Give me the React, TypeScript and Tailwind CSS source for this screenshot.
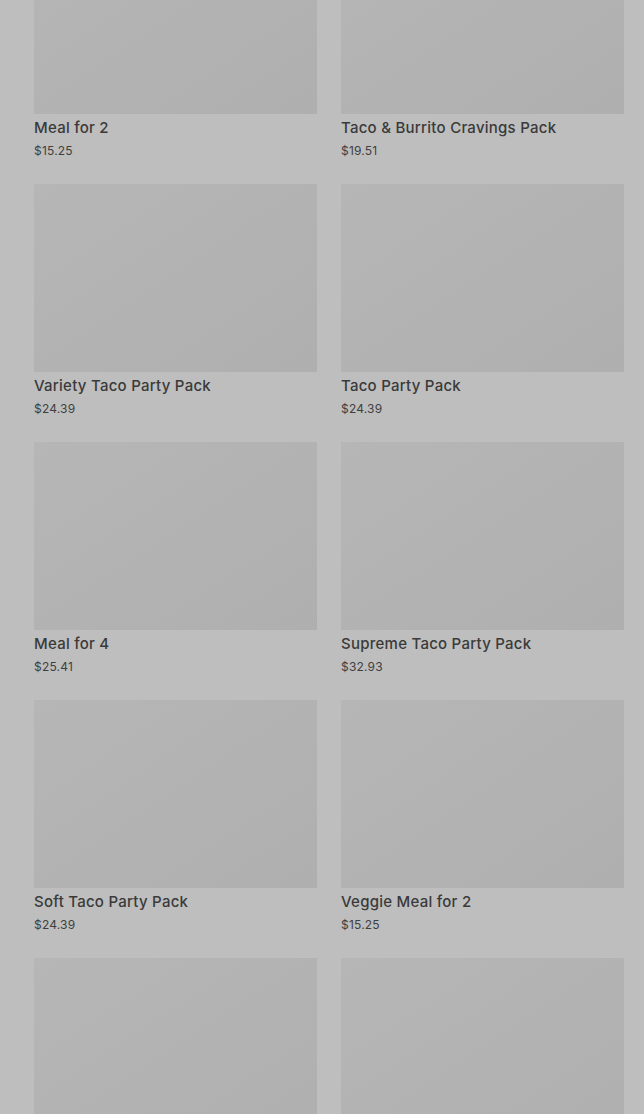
import React from "react";

const items = [
  ["Meal for 2", "$15.25"],
  ["Taco & Burrito Cravings Pack", "$19.51"],
  ["Variety Taco Party Pack", "$24.39"],
  ["Taco Party Pack", "$24.39"],
  ["Meal for 4", "$25.41"],
  ["Supreme Taco Party Pack", "$32.93"],
  ["Soft Taco Party Pack", "$24.39"],
  ["Veggie Meal for 2", "$15.25"],
  ["", ""],
  ["", ""],
];

export default function App() {
  return (
    <div
      className="w-[644px] h-[1114px] overflow-hidden bg-[#bebebe]"
      style={{ fontFamily: "Inter, 'Noto Sans', sans-serif" }}
    >
      <div className="grid grid-cols-2 gap-x-[24px] gap-y-[13px] pl-[34px] pr-[20px] mt-[-74px]">
        {items.map(([name, price], i) => (
          <div key={i} className="flex flex-col">
            <div className="h-[188px] bg-gradient-to-br from-[#b6b6b6] to-[#afafaf]" />
            <div className="h-[57px]">
              <div className="mt-[4px] text-[15px] leading-[20px] font-medium text-[#3a3a3a] tracking-[0.25px]">
                {name}
              </div>
              <div className="mt-[5px] text-[12px] leading-[16px] text-[#3f3f3f] tracking-[0.2px]">
                {price}
              </div>
            </div>
          </div>
        ))}
      </div>
    </div>
  );
}
